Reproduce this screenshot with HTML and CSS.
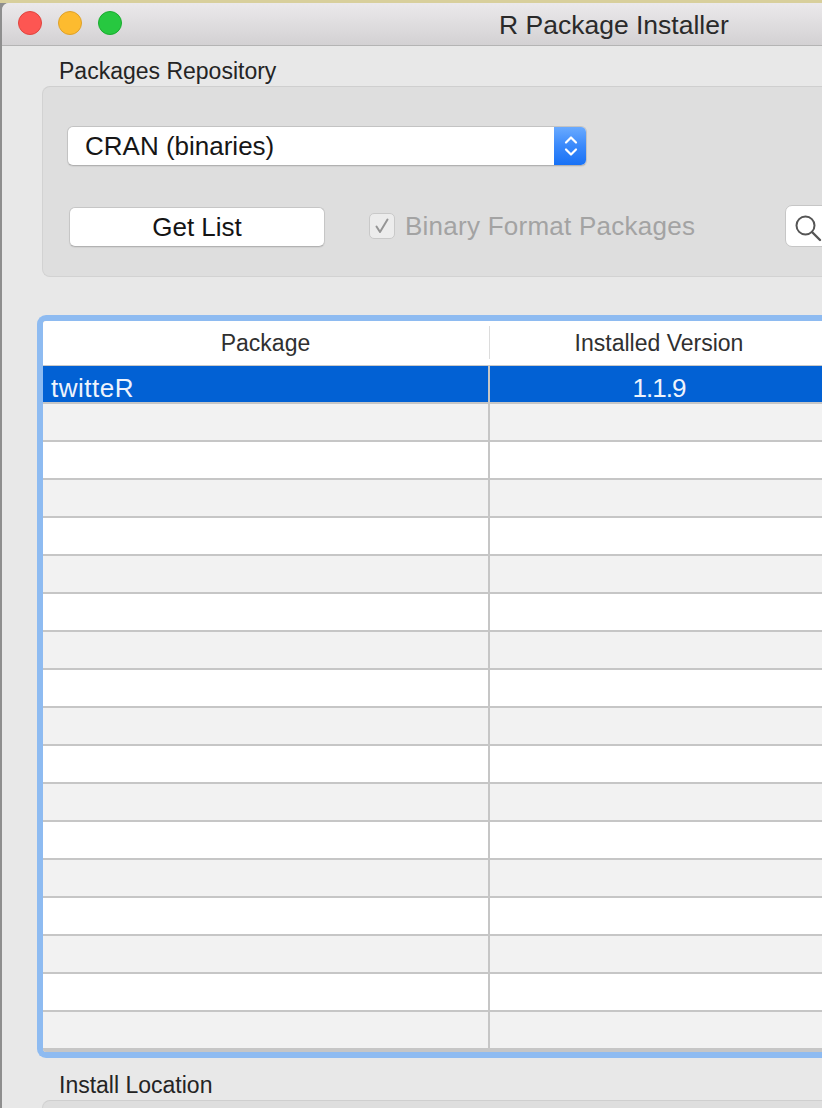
FILE: index.html
```html
<!DOCTYPE html>
<html lang="en">
<head>
<meta charset="utf-8">
<title>R Package Installer</title>
<link rel="stylesheet" href="styles.css">
</head>
<body>
<div class="window">
  <div class="titlebar">
    <div class="lights">
      <span class="light red"></span>
      <span class="light yellow"></span>
      <span class="light green"></span>
    </div>
    <div class="title">R Package Installer</div>
  </div>
  <div class="content">
    <div class="section-label">Packages Repository</div>
    <div class="group">
      <div class="popup">
        <span class="popup-text">CRAN (binaries)</span>
        <span class="popup-arrows">
          <svg width="16" height="26" viewBox="0 0 16 26"><path d="M3 9.5 L8 4.5 L13 9.5" fill="none" stroke="#fff" stroke-width="2.2" stroke-linecap="round" stroke-linejoin="round"/><path d="M3 16.5 L8 21.5 L13 16.5" fill="none" stroke="#fff" stroke-width="2.2" stroke-linecap="round" stroke-linejoin="round"/></svg>
        </span>
      </div>
      <div class="controls">
        <div class="btn">Get List</div>
        <span class="checkbox">
          <svg width="26" height="26" viewBox="0 0 26 26"><path d="M7.5 13.5 L11 19 L18.5 6.5" fill="none" stroke="#959595" stroke-width="2" stroke-linecap="round" stroke-linejoin="round"/></svg>
        </span>
        <span class="check-label">Binary Format Packages</span>
        <div class="search">
          <svg width="36" height="36" viewBox="0 0 36 36"><circle cx="19.5" cy="16.5" r="9" fill="none" stroke="#555" stroke-width="2"/><path d="M26 23 L34 31" stroke="#555" stroke-width="2.4" stroke-linecap="round"/></svg>
        </div>
      </div>
    </div>

    <div class="table-ring">
      <div class="table">
        <div class="thead">
          <div class="th th1">Package</div>
          <div class="hsep"></div>
          <div class="th th2">Installed Version</div>
        </div>
        <div class="row selected"><div class="cell c1">twitteR</div><div class="cell c2 ver">1.1.9</div></div>
        <div class="row alt"><div class="cell c1"></div><div class="cell c2"></div></div>
        <div class="row"><div class="cell c1"></div><div class="cell c2"></div></div>
        <div class="row alt"><div class="cell c1"></div><div class="cell c2"></div></div>
        <div class="row"><div class="cell c1"></div><div class="cell c2"></div></div>
        <div class="row alt"><div class="cell c1"></div><div class="cell c2"></div></div>
        <div class="row"><div class="cell c1"></div><div class="cell c2"></div></div>
        <div class="row alt"><div class="cell c1"></div><div class="cell c2"></div></div>
        <div class="row"><div class="cell c1"></div><div class="cell c2"></div></div>
        <div class="row alt"><div class="cell c1"></div><div class="cell c2"></div></div>
        <div class="row"><div class="cell c1"></div><div class="cell c2"></div></div>
        <div class="row alt"><div class="cell c1"></div><div class="cell c2"></div></div>
        <div class="row"><div class="cell c1"></div><div class="cell c2"></div></div>
        <div class="row alt"><div class="cell c1"></div><div class="cell c2"></div></div>
        <div class="row"><div class="cell c1"></div><div class="cell c2"></div></div>
        <div class="row alt"><div class="cell c1"></div><div class="cell c2"></div></div>
        <div class="row"><div class="cell c1"></div><div class="cell c2"></div></div>
        <div class="row alt"><div class="cell c1"></div><div class="cell c2"></div></div>
      </div>
    </div>

    <div class="section-label label2">Install Location</div>
    <div class="group group2"></div>
  </div>
</div>
</body>
</html>
```

FILE: styles.css
```css
html, body {
  margin: 0;
  padding: 0;
  overflow: hidden;
  width: 100%;
  height: 100%;
}
html {
  background: linear-gradient(to bottom, #d8cf9c 0, #d8cf9c 3px, #8e8e8e 3px);
}
body {
  font-family: "Liberation Sans", Arial, Helvetica, sans-serif;
  color: #222;
}
.window {
  margin: 3px 0 0 2px;
  width: 820px;
  height: 1105px;
  background: #e8e8e8;
  border-top-left-radius: 7px;
  overflow: hidden;
}
.titlebar {
  height: 42px;
  border-bottom: 1px solid #b4b4b4;
  background: linear-gradient(to bottom, #ebe9eb 0%, #d3d1d3 100%);
  display: flex;
  align-items: center;
}
.lights {
  display: flex;
  gap: 16px;
  padding-left: 16px;
  margin-bottom: 2px;
}
.light {
  width: 22px;
  height: 22px;
  border-radius: 50%;
  display: block;
}
.red { background: #fd5652; border: 1px solid #e0443e; }
.yellow { background: #fdbb2f; border: 1px solid #dea12a; }
.green { background: #27c840; border: 1px solid #1aab2f; }
.title {
  margin-left: 377px;
  font-size: 26.5px;
  color: #2a2a2a;
  padding-top: 3px;
  white-space: nowrap;
}
.content {
  padding-left: 40px;
}
.section-label {
  font-size: 23px;
  line-height: 26px;
  color: #242424;
  padding-left: 17px;
  margin-top: 12px;
  white-space: nowrap;
}
.label2 { margin-top: 14px; }
.group {
  margin-top: 2px;
  width: 900px;
  background: #dedede;
  border: 1px solid #d2d2d2;
  border-top-color: #cfcfcf;
  border-right: none;
  border-radius: 8px 0 0 8px;
  padding: 39px 0 29px 24px;
  box-sizing: border-box;
  height: 191px;
}
.popup {
  width: 520px;
  height: 40px;
  box-sizing: border-box;
  background: #fff;
  border: 1px solid #c3c3c3;
  border-bottom-color: #b1b1b1;
  border-radius: 6px;
  box-shadow: 0 1px 1px rgba(0,0,0,0.06);
  display: flex;
  align-items: stretch;
  overflow: hidden;
}
.popup-text {
  flex: 1;
  display: flex;
  align-items: center;
  padding-left: 17px;
  font-size: 26px;
  color: #161616;
}
.popup-arrows {
  width: 33px;
  background: linear-gradient(to bottom, #6cacff 0%, #3a89fb 50%, #1670f5 100%);
  display: flex;
  align-items: center;
  justify-content: center;
  margin: -1px -1px -1px 0;
}
.controls {
  margin-top: 39px;
  display: flex;
  align-items: flex-end;
  height: 42px;
}
.btn {
  flex: 0 0 auto;
  margin-left: 2px;
  width: 256px;
  height: 40px;
  box-sizing: border-box;
  background: #fff;
  border: 1px solid #c6c6c6;
  border-bottom-color: #b2b2b2;
  border-radius: 6px;
  box-shadow: 0 1px 1px rgba(0,0,0,0.06);
  font-size: 26px;
  color: #141414;
  display: flex;
  align-items: center;
  justify-content: center;
}
.checkbox {
  flex: 0 0 auto;
  align-self: center;
  margin-left: 44px;
  width: 26px;
  height: 26px;
  box-sizing: border-box;
  border: 1px solid #c9c9c9;
  border-radius: 5px;
  background: #ececec;
  display: flex;
  align-items: center;
  justify-content: center;
}
.checkbox svg { display: block; margin: -1px; }
.check-label {
  flex: 0 0 auto;
  align-self: center;
  margin-left: 10px;
  width: 290px;
  white-space: nowrap;
  font-size: 26px;
  letter-spacing: 0.25px;
  color: #a3a3a3;
}
.search {
  flex: 0 0 auto;
  margin-left: 90px;
  width: 200px;
  height: 42px;
  box-sizing: border-box;
  background: #fff;
  border: 1px solid #c6c6c6;
  border-radius: 7px;
  display: flex;
  align-items: center;
}
.search svg { display: block; margin-left: 0; margin-top: 1px; }
.table-ring {
  margin-top: 38px;
  margin-left: -5px;
  border: 6px solid #8ebbf1;
  border-right: none;
  border-radius: 9px 0 0 9px;
  overflow: hidden;
  width: 900px;
}
.table {
  padding-bottom: 2px;
  background-color: #c6c6c6;
}
.thead {
  height: 44px;
  background: #fff;
  border-bottom: 1px solid #c9c9c9;
  display: flex;
}
.th {
  font-size: 23px;
  line-height: 44px;
  color: #303030;
  text-align: center;
  white-space: nowrap;
}
.th1 { width: 445px; }
.hsep {
  width: 1px;
  margin: 5px 0 6px 1px;
  background: #dcdcdc;
}
.th2 { width: 338px; }
.row {
  display: flex;
  height: 38px;
  box-sizing: border-box;
  border-bottom: 2px solid #c6c6c6;
  background: #fff;
}
.row.alt { background: #f2f2f2; }
.row.selected { background: #0261d4; color: #eef3fc; }
.cell {
  height: 36px;
  box-sizing: border-box;
  padding-top: 9px;
  font-size: 26px;
  line-height: 27px;
  white-space: nowrap;
}
.c1 {
  width: 447px;
  border-right: 2px solid #c6c6c6;
  padding-left: 8px;
  letter-spacing: 0.5px;
}
.c2 {
  width: 338px;
  text-align: center;
}
.ver { letter-spacing: -1px; }
.group2 {
  margin-top: 2px;
  padding: 0;
  height: 40px;
}
```
